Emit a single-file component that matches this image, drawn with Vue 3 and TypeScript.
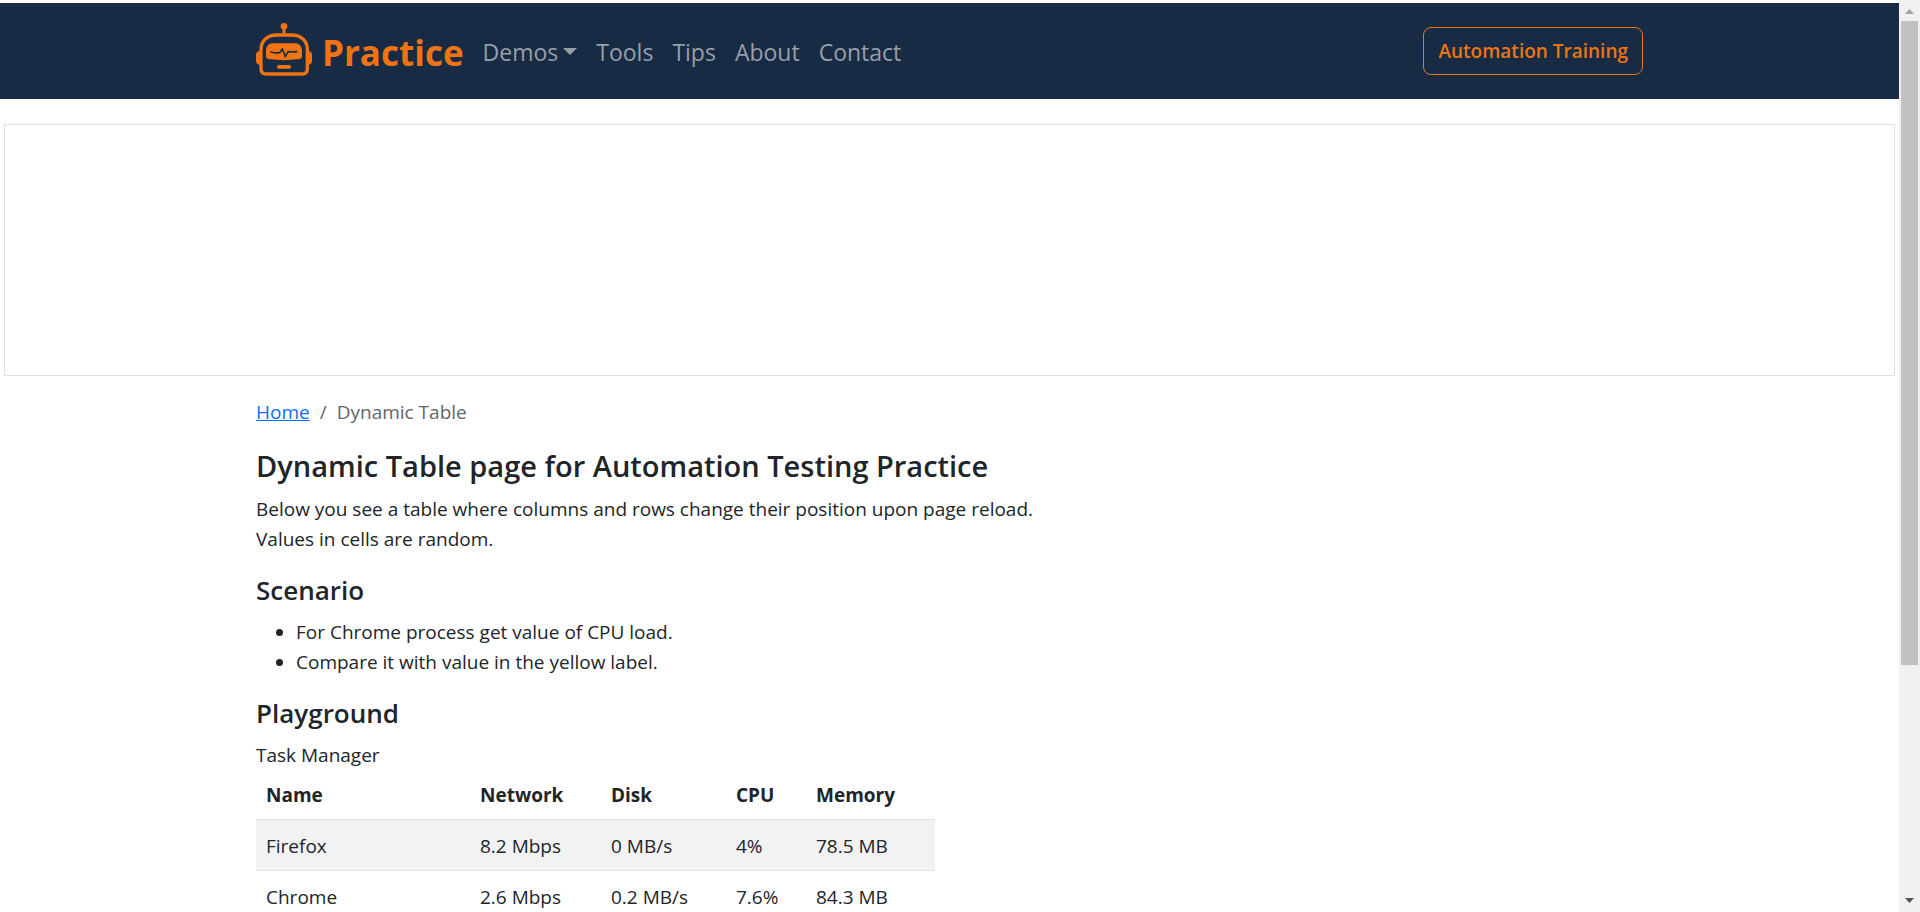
<script setup lang="ts">
interface NavItem {
  label: string
  dropdown?: boolean
}

interface ProcessRow {
  name: string
  network: string
  disk: string
  cpu: string
  memory: string
}

const navItems: NavItem[] = [
  { label: 'Demos', dropdown: true },
  { label: 'Tools' },
  { label: 'Tips' },
  { label: 'About' },
  { label: 'Contact' },
]

const steps: string[] = [
  'For Chrome process get value of CPU load.',
  'Compare it with value in the yellow label.',
]

const columns: { key: keyof ProcessRow; label: string }[] = [
  { key: 'name', label: 'Name' },
  { key: 'network', label: 'Network' },
  { key: 'disk', label: 'Disk' },
  { key: 'cpu', label: 'CPU' },
  { key: 'memory', label: 'Memory' },
]

const rows: ProcessRow[] = [
  { name: 'Firefox', network: '8.2 Mbps', disk: '0 MB/s', cpu: '4%', memory: '78.5 MB' },
  { name: 'Chrome', network: '2.6 Mbps', disk: '0.2 MB/s', cpu: '7.6%', memory: '84.3 MB' },
]
</script>

<template>
  <div class="shell">
    <div class="page">
      <header class="navbar">
        <div class="container navbar-inner">
          <a class="brand" href="#">
            <svg class="robot" viewBox="0 0 168 159" aria-hidden="true">
              <circle cx="84" cy="10" r="10" fill="#ef7411" />
              <path d="M84 12V36" stroke="#ef7411" stroke-width="9" />
              <path
                d="M15 137V80C15 52 36 36 62 36H107C133 36 154 52 154 80V137Q154 153 138 153H31Q15 153 15 137Z"
                fill="none"
                stroke="#ef7411"
                stroke-width="10"
              />
              <path d="M13 83V126Q0 124 0 114V95Q0 85 13 83ZM155 83V126Q168 124 168 114V95Q168 85 155 83Z" fill="#ef7411" />
              <path
                d="M50 61H118C131 61 138 72 138 84V98C138 106 134 108 126 109Q84 114 42 109C34 108 30 106 30 98V84C30 72 37 61 50 61Z"
                fill="#ef7411"
              />
              <path
                d="M45 87Q58 91 71 89L79 78L88 101L96 86Q104 88 122 86"
                fill="none"
                stroke="#182b44"
                stroke-width="5"
                stroke-linecap="round"
                stroke-linejoin="round"
              />
              <rect x="63" y="126" width="42" height="11" rx="5" fill="#ef7411" />
            </svg>
            <span>Practice</span>
          </a>
          <nav class="links">
            <a v-for="item in navItems" :key="item.label" href="#" :class="{ dropdown: item.dropdown }">{{ item.label }}</a>
          </nav>
          <a class="training" href="#">Automation Training</a>
        </div>
      </header>

      <div class="banner"></div>

      <main class="container">
        <nav class="breadcrumb" aria-label="breadcrumb">
          <a href="#">Home</a>
          <span>/</span>
          <span>Dynamic Table</span>
        </nav>
        <h1>Dynamic Table page for Automation Testing Practice</h1>
        <p>Below you see a table where columns and rows change their position upon page reload.<br />Values in cells are random.</p>
        <h2>Scenario</h2>
        <ul>
          <li v-for="step in steps" :key="step">{{ step }}</li>
        </ul>
        <h2>Playground</h2>
        <div class="halves">
          <section>
            <div id="tasks-title">Task Manager</div>
            <table aria-labelledby="tasks-title">
              <thead>
                <tr>
                  <th v-for="column in columns" :key="column.key" :class="column.key" scope="col">{{ column.label }}</th>
                </tr>
              </thead>
              <tbody>
                <tr v-for="row in rows" :key="row.name">
                  <td v-for="column in columns" :key="column.key">{{ row[column.key] }}</td>
                </tr>
              </tbody>
            </table>
          </section>
        </div>
      </main>
    </div>
    <div class="scrollbar" aria-hidden="true">
      <svg viewBox="0 0 21 21"><path d="M6 14L10.500 9L15 14Z" fill="#a3a3a3" /></svg>
      <div class="track"><div class="thumb"></div></div>
      <svg viewBox="0 0 21 21"><path d="M6 7L10.500 12L15 7Z" fill="#505050" /></svg>
    </div>
  </div>
</template>

<style>
body {
  margin: 0;
  background: #fff;
}
</style>

<style scoped>
.shell {
  display: flex;
  height: 100vh;
  overflow: hidden;
  font-family: "Segoe UI", "Open Sans", "Noto Sans", sans-serif;
  font-size: 19px;
  line-height: 30px;
  color: #212529;
}

.page {
  flex: 1;
  min-width: 0;
  padding-top: 3px;
  overflow: hidden;
}

.container {
  box-sizing: border-box;
  max-width: 1417px;
  margin: 0 auto;
  padding: 0 15px;
}

.navbar {
  background: #182b44;
}

.navbar-inner {
  display: flex;
  align-items: center;
  height: 96px;
}

.brand {
  display: flex;
  align-items: center;
  gap: 10px;
  margin-right: 19px;
  padding-top: 3px;
  color: #ef7411;
  font-size: 35px;
  font-weight: 700;
  line-height: 48px;
  text-decoration: none;
}

.robot {
  width: 56px;
  height: 53px;
  margin-bottom: 6px;
}

.links {
  display: flex;
  gap: 19px;
  padding-top: 2px;
}

.links a {
  color: #979fa9;
  font-size: 23px;
  text-decoration: none;
}

.dropdown::after {
  content: "";
  display: inline-block;
  margin-left: 5px;
  vertical-align: 6px;
  border: 7px solid transparent;
  border-top-color: currentColor;
  border-bottom: 0;
}

.training {
  margin-left: auto;
  padding: 8px 14px;
  border: 1px solid #ef7411;
  border-radius: 8px;
  color: #ef7411;
  font-weight: 600;
  text-decoration: none;
}

.banner {
  height: 250px;
  margin: 25px 4px 0;
  border: 1px solid #dee2e6;
}

.breadcrumb {
  display: flex;
  gap: 10px;
  margin: 21px 0 20px;
  color: #62666a;
}

.breadcrumb a {
  color: #0d6efd;
}

h1,
h2,
p,
ul {
  margin: 0;
}

h1 {
  margin-bottom: 10px;
  font-size: 29px;
  font-weight: 600;
  line-height: 37px;
}

p,
ul {
  margin-bottom: 20px;
}

ul {
  padding-left: 40px;
}

h2 {
  margin-bottom: 10px;
  font-size: 26px;
  font-weight: 600;
  line-height: 33px;
}

.halves {
  display: grid;
  grid-template-columns: 1fr 1fr;
  gap: 30px;
}

table {
  width: 100%;
  border-collapse: collapse;
  table-layout: fixed;
}

th,
td {
  padding: 11px 10px 9px;
  border-bottom: 1px solid #dee2e6;
  text-align: left;
  white-space: nowrap;
}

th {
  padding-top: 10px;
  font-weight: 700;
}

tbody tr:nth-child(odd) {
  background: #f2f2f2;
}

.name {
  width: 194px;
}

.network {
  width: 111px;
}

.disk {
  width: 105px;
}

.cpu {
  width: 60px;
}

.scrollbar {
  display: flex;
  flex-direction: column;
  width: 21px;
  background: #f1f1f1;
}

.track {
  flex: 1;
  padding: 0 2px;
}

.thumb {
  height: 74%;
  background: #c1c1c1;
}
</style>
